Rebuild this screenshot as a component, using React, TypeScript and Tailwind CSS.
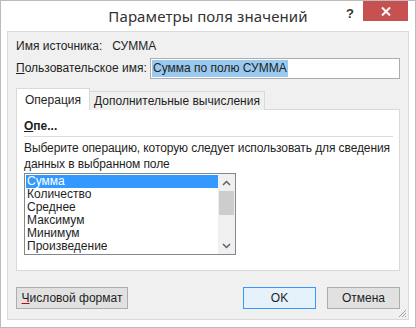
import React from "react";

const body = { fontFamily: '"Liberation Sans", Arial, sans-serif' };
const title = { fontFamily: '"Noto Sans", "Open Sans", sans-serif' };

export default function App() {
  const items = ["Сумма", "Количество", "Среднее", "Максимум", "Минимум", "Произведение"];
  return (
    <div
      className="relative w-[416px] h-[328px] bg-white border border-[#bcbcbc] text-[12px] text-[#1e1e1e] flex flex-col overflow-hidden whitespace-nowrap"
      style={body}
    >
      {/* Title bar */}
      <div className="relative h-[30px] shrink-0 flex items-center justify-center">
        <span className="text-[15px] text-[#333] tracking-[0.1px]" style={title}>
          Параметры поля значений
        </span>
        <span className="absolute left-[345px] top-[3px] text-[13px] font-bold text-[#333]">?</span>
        <div className="absolute left-[362px] top-0 w-[45px] h-[20px] bg-[#c75050] flex items-center justify-center">
          <svg width="10" height="9" viewBox="0 0 10 9">
            <path d="M1 0.5 L9 8.5 M9 0.5 L1 8.5" stroke="#fff" strokeWidth="2" />
          </svg>
        </div>
      </div>

      {/* Client area */}
      <div className="mx-[6px] flex-1 mb-[7px] bg-[#f0f0f0] border border-[#dadada] flex flex-col px-[8px]">
        <div className="h-[26px] flex items-center pt-[1px]">
          <span>Имя источника:</span>
          <span className="ml-[10px]">СУММА</span>
        </div>
        <div className="h-[20px] flex items-center">
          <span className="w-[134px]">
            <span className="underline">П</span>ользовательское имя:
          </span>
          <div className="flex-1 h-[21px] bg-white border border-[#abadb3] flex items-center px-[1px]">
            <span className="bg-[#99c9ef] px-[1px] leading-[17px]">Сумма по полю СУММА</span>
          </div>
        </div>

        {/* Tabs */}
        <div className="mt-[10px] flex items-end h-[22px] relative z-10">
          <div className="h-[22px] w-[74px] bg-white border border-[#d9d9d9] border-b-0 flex items-center justify-center">
            Операция
          </div>
          <div className="h-[19px] w-[175px] bg-[#f0f0f0] border border-[#d9d9d9] border-l-0 border-b-0 flex items-center justify-center">
            Дополнительные вычисления
          </div>
        </div>
        <div className="-mt-[1px] h-[162px] bg-white border border-[#d9d9d9] px-[7px] pt-[9px] flex flex-col">
          <div className="font-bold leading-[14px]">
            <span className="underline">О</span>пе...
          </div>
          <div className="mt-[3px] h-px bg-[#dcdcdc] mr-[-1px]" />
          <div className="mt-[3px] leading-[16px] whitespace-nowrap tracking-[-0.1px]">
            <div>Выберите операцию, которую следует использовать для сведения</div>
            <div>данных в выбранном поле</div>
          </div>
          <div className="mt-[1px] w-[212px] h-[82px] border border-[#828790] flex">
            <div className="flex-1 flex flex-col pt-[1px] pl-[1px]">
              {items.map((it, i) => (
                <div
                  key={it}
                  className={
                    "h-[13px] leading-[13px] pl-[1px] " +
                    (i === 0 ? "bg-[#3399ff] text-white" : "")
                  }
                >
                  {it}
                </div>
              ))}
            </div>
            <div className="w-[17px] bg-[#f0f0f0] flex flex-col items-center">
              <div className="h-[17px] flex items-center justify-center">
                <svg width="9" height="6" viewBox="0 0 9 6">
                  <path d="M1 5 L4.5 1.5 L8 5" stroke="#606060" strokeWidth="1.5" fill="none" />
                </svg>
              </div>
              <div className="w-[15px] h-[24px] bg-[#cdcdcd]" />
              <div className="flex-1" />
              <div className="h-[17px] flex items-center justify-center">
                <svg width="9" height="6" viewBox="0 0 9 6">
                  <path d="M1 1 L4.5 4.5 L8 1" stroke="#606060" strokeWidth="1.5" fill="none" />
                </svg>
              </div>
            </div>
          </div>
        </div>

        {/* Buttons */}
        <div className="mt-[16px] flex items-center h-[22px]">
          <div className="w-[112px] h-[22px] bg-[#e1e1e1] border border-[#adadad] flex items-center justify-center">
            <span>
              <span className="underline decoration-[#c00]">Ч</span>исловой формат
            </span>
          </div>
          <div className="flex-1" />
          <div className="w-[73px] h-[22px] bg-[#e5f1fb] border border-[#3399ff] flex items-center justify-center">
            OK
          </div>
          <div className="w-[73px] h-[22px] ml-[11px] bg-[#e1e1e1] border border-[#adadad] flex items-center justify-center">
            Отмена
          </div>
        </div>
        <div className="relative flex-1">
          <svg className="absolute right-[-7px] bottom-[1px]" width="10" height="10" viewBox="0 0 10 10">
            <path d="M9 2 L2 9 M9 5 L5 9 M9 8 L8 9" stroke="#a0a0a0" strokeWidth="1" />
          </svg>
        </div>
      </div>
    </div>
  );
}
